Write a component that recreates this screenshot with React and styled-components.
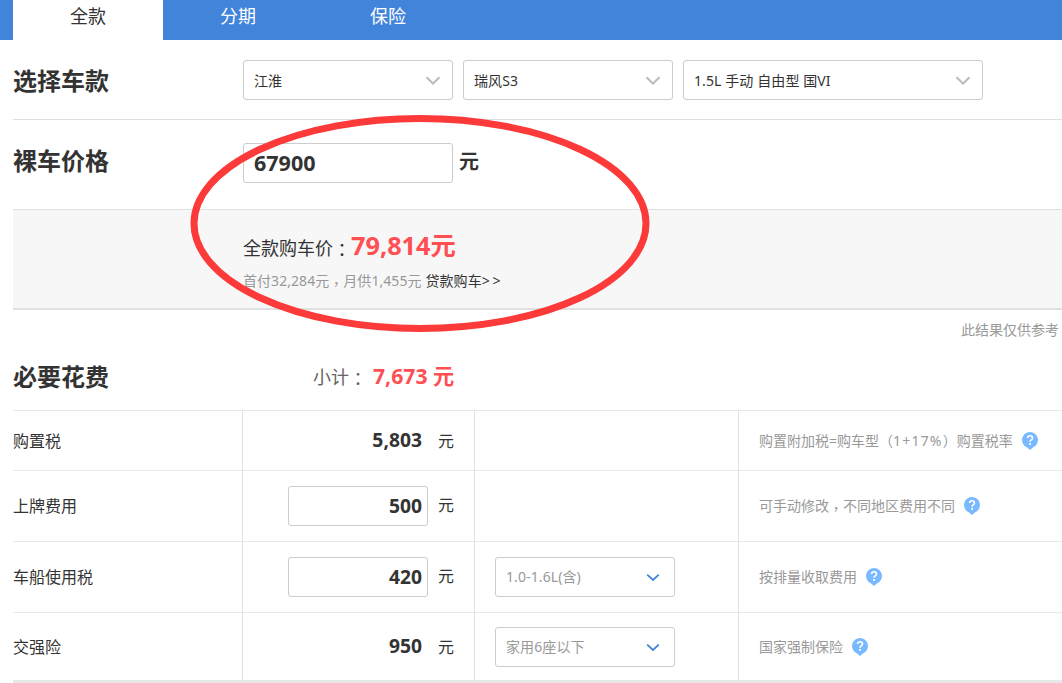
import React, { useState } from 'react';
import styled, { createGlobalStyle } from 'styled-components';

const GlobalStyle = createGlobalStyle`
* {
  box-sizing: border-box;
}
body {
  margin: 0;
  background-color: #fff;
  color: #333;
  font-family: "Noto Sans", "Noto Sans CJK SC", sans-serif;
  font-size: 14px;
}
`;
const PageStyle = styled.div`
position: relative;
width: 1062px;
height: 683px;
overflow: hidden;
`;
const TabBarStyle = styled.div`
display: flex;
height: 40px;
padding-left: 13px;
background-color: #4384db;
`;
const TabStyle = styled.div`
width: 150px;
line-height: 32px;
font-size: 18px;
text-align: center;
color: ${(props) => (props.$active ? '#333' : '#fff')};
background-color: ${(props) => (props.$active ? '#fff' : 'transparent')};
`;
const ContentStyle = styled.div`
margin-left: 13px;
`;
const FormRowStyle = styled.div`
display: flex;
align-items: flex-start;
height: ${(props) => props.$height}px;
padding-top: ${(props) => props.$top}px;
border-bottom: 1px solid #e0e0e0;
`;
const TitleStyle = styled.div`
width: ${(props) => props.$width || 230}px;
line-height: ${(props) => props.$line || 40}px;
font-size: 24px;
font-weight: bold;
`;
const SelectGroupStyle = styled.div`
display: flex;
gap: 10px;
`;
const SelectStyle = styled.div`
display: flex;
align-items: center;
justify-content: space-between;
width: ${(props) => props.$width}px;
height: 40px;
padding: 0 ${(props) => (props.$small ? 14 : 11)}px 0 10px;
border: 1px solid #ccc;
border-radius: 3px;
background-color: #fff;
font-size: 14px;
letter-spacing: 0.1px;
color: ${(props) => (props.$small ? '#999' : '#333')};
`;
const InputStyle = styled.input`
width: ${(props) => props.$width}px;
height: 40px;
padding: 0 5px 2px 10px;
border: 1px solid #ccc;
border-radius: 3px;
outline: none;
background-color: #fff;
color: #333;
font-family: inherit;
font-size: ${(props) => (props.$right ? 19.3 : 21.5)}px;
font-weight: bold;
text-align: ${(props) => (props.$right ? 'right' : 'left')};
`;
const PriceUnitStyle = styled.div`
margin-left: 6px;
line-height: 38px;
font-size: 20px;
font-weight: bold;
`;
const SummaryStyle = styled.div`
height: 100px;
padding: 17px 0 0 230px;
background-color: #f7f7f7;
border-bottom: 2px solid #e0e0e0;
`;
const TotalStyle = styled.div`
display: flex;
align-items: baseline;
height: 39px;
line-height: 37px;
font-size: 18px;
`;
const TotalPriceStyle = styled.span`
font-size: 25.3px;
font-weight: bold;
color: #ff4f53;
`;
const PunctuationStyle = styled.span`
font-family: "Noto Sans CJK TC", sans-serif;
line-height: 1;
vertical-align: ${(props) => (props.$comma ? -3 : -2)}px;
`;
const LoanStyle = styled.div`
display: flex;
gap: 4px;
height: 30px;
line-height: 30px;
letter-spacing: 0.05px;
color: #999;
`;
const LoanLinkStyle = styled.a`
color: #333;
`;
const MoreStyle = styled.span`
letter-spacing: 2.8px;
`;
const TipStyle = styled.div`
height: 34px;
padding-right: 3px;
line-height: 40px;
text-align: right;
color: #999;
`;
const SectionHeadStyle = styled.div`
display: flex;
height: 66px;
padding-top: 13px;
`;
const SubtotalStyle = styled.div`
display: flex;
align-items: baseline;
line-height: 38px;
font-size: 18px;
color: #666;
`;
const SubtotalPriceStyle = styled.span`
margin-left: 6px;
font-size: 21.2px;
font-weight: bold;
color: #ff4f53;
`;
const TableStyle = styled.div`
border-top: 1px solid #e8e8e8;
border-bottom: 3px solid #e8e8e8;
`;
const TableRowStyle = styled.div`
display: grid;
grid-template-columns: 230px 232px 264px auto;
height: ${(props) => props.$height}px;

& + & {
  border-top: 1px solid #e8e8e8;
}
`;
const CellStyle = styled.div`
display: flex;
align-items: center;
border-right: 1px solid #e0e0e0;
font-size: 16px;

&:last-child {
  border-right: 0;
}
`;
const FeeCellStyle = styled(CellStyle)`
justify-content: flex-end;
gap: 10px;
padding-right: 20px;
`;
const OptionCellStyle = styled(CellStyle)`
padding-left: 20px;
`;
const NoteCellStyle = styled(CellStyle)`
gap: 9px;
padding-left: 20px;
font-size: 14px;
color: #999;
`;
const TextStyle = styled.div`
padding-bottom: 2px;
`;
const FormulaStyle = styled.span`
letter-spacing: 1.2px;
`;
const FeeStyle = styled.div`
padding: 0 6px 2px 0;
line-height: 38px;
font-size: 19.3px;
font-weight: bold;
`;
const UnitStyle = styled.div`
padding-bottom: ${(props) => (props.$raised ? 5 : 2)}px;
`;
const CircleStyle = styled.svg`
position: absolute;
top: 110px;
left: 185px;
pointer-events: none;
`;

const Arrow = ({ color }) => (
	<svg width="16" height="10" viewBox="0 0 16 10" fill="none">
		<path d="M1.5 2.2L8 8.5L14.5 2.2" stroke={color} strokeWidth="2" />
	</svg>
);

const SmallArrow = ({ color }) => (
	<svg width="14" height="10" viewBox="0 0 14 10" fill="none">
		<path d="M1.2 2.6L7 8L12.8 2.6" stroke={color} strokeWidth="1.8" />
	</svg>
);

const HelpIcon = () => (
	<svg width="16" height="18" viewBox="0 0 16 18">
		<path d="M8 0a8 8 0 0 1 3.2 15.3L8 18l-3.2-2.7A8 8 0 0 1 8 0z" fill="#78b9ff" />
		<path d="M5.6 6.1C5.6 4.6 6.6 3.8 8 3.8s2.5.8 2.5 2.1c0 1.6-2.4 1.9-2.4 3.8" fill="none" stroke="#fff" strokeWidth="1.6" />
		<rect x="7.2" y="11" width="1.8" height="1.8" fill="#fff" />
	</svg>
);

const tabs = ['全款', '分期', '保险'];

const fees = [
	{ name: '购置税', value: '5,803', height: 59, note: <>购置附加税=购车型（<FormulaStyle>1+17%</FormulaStyle>）购置税率</> },
	{ name: '上牌费用', value: '500', height: 71, editable: true, note: <>可手动修改<PunctuationStyle $comma>，</PunctuationStyle>不同地区费用不同</> },
	{ name: '车船使用税', value: '420', height: 71, editable: true, option: '1.0-1.6L(含)', note: '按排量收取费用' },
	{ name: '交强险', value: '950', height: 68, option: '家用6座以下', note: '国家强制保险' },
];

const FeeRow = ({ fee }) => {
	const [value, setValue] = useState(fee.value);

	return (
		<TableRowStyle $height={fee.height}>
			<CellStyle><TextStyle>{fee.name}</TextStyle></CellStyle>
			<FeeCellStyle>
				{fee.editable
					? <InputStyle $width={140} $right value={value} onChange={(e) => setValue(e.target.value)} />
					: <FeeStyle>{value}</FeeStyle>}
				<UnitStyle $raised={fee.editable}>元</UnitStyle>
			</FeeCellStyle>
			<OptionCellStyle>
				{fee.option ? <SelectStyle $width={180} $small><TextStyle>{fee.option}</TextStyle><SmallArrow color="#4384db" /></SelectStyle> : null}
			</OptionCellStyle>
			<NoteCellStyle><TextStyle>{fee.note}</TextStyle><HelpIcon /></NoteCellStyle>
		</TableRowStyle>
	);
};

const App = () => {
	const [tab, setTab] = useState('全款');
	const [price, setPrice] = useState('67900');

	return (
		<PageStyle>
			<GlobalStyle />
			<TabBarStyle>
				{tabs.map((t) => <TabStyle key={t} $active={t === tab} onClick={() => setTab(t)}>{t}</TabStyle>)}
			</TabBarStyle>
			<ContentStyle>
				<FormRowStyle $height={80} $top={20}>
					<TitleStyle $line={42}>选择车款</TitleStyle>
					<SelectGroupStyle>
						<SelectStyle $width={210}>江淮<Arrow color="#bbb" /></SelectStyle>
						<SelectStyle $width={210}>瑞风S3<Arrow color="#bbb" /></SelectStyle>
						<SelectStyle $width={300}>1.5L 手动 自由型 国VI<Arrow color="#bbb" /></SelectStyle>
					</SelectGroupStyle>
				</FormRowStyle>
				<FormRowStyle $height={90} $top={23}>
					<TitleStyle $line={36}>裸车价格</TitleStyle>
					<InputStyle $width={210} value={price} onChange={(e) => setPrice(e.target.value)} />
					<PriceUnitStyle>元</PriceUnitStyle>
				</FormRowStyle>
				<SummaryStyle>
					<TotalStyle>
						<span>全款购车价<PunctuationStyle>：</PunctuationStyle></span>
						<TotalPriceStyle>79,814元</TotalPriceStyle>
					</TotalStyle>
					<LoanStyle>
						<span>首付32,284元<PunctuationStyle $comma>，</PunctuationStyle>月供1,455元</span>
						<LoanLinkStyle>贷款购车<MoreStyle>&gt;&gt;</MoreStyle></LoanLinkStyle>
					</LoanStyle>
				</SummaryStyle>
				<TipStyle>此结果仅供参考</TipStyle>
				<SectionHeadStyle>
					<TitleStyle $width={300}>必要花费</TitleStyle>
					<SubtotalStyle>
						<span>小计<PunctuationStyle>：</PunctuationStyle></span>
						<SubtotalPriceStyle>7,673 元</SubtotalPriceStyle>
					</SubtotalStyle>
				</SectionHeadStyle>
				<TableStyle>
					{fees.map((fee) => <FeeRow key={fee.name} fee={fee} />)}
				</TableStyle>
			</ContentStyle>
			{/* 价格区域的红圈标记 */}
			<CircleStyle width="470" height="228" viewBox="0 0 470 228">
				<ellipse cx="235" cy="113.5" rx="226" ry="105" fill="none" stroke="#fb3a39" strokeWidth="7" />
			</CircleStyle>
		</PageStyle>
	);
};

export default App;
